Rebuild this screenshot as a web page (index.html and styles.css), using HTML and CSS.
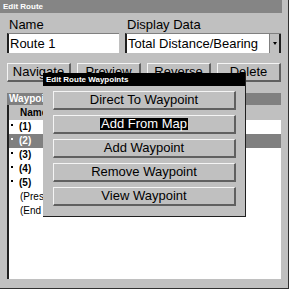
FILE: index.html
```html
<!DOCTYPE html>
<html lang="en">
<head>
    <meta charset="UTF-8">
    <title>Edit Route</title>
    <link rel="stylesheet" href="styles.css">
</head>
<body>
    <div class="window">
        <div class="titlebar">Edit Route</div>
        <div class="content">
            <div class="fields">
                <div class="field">
                    <div class="label">Name</div>
                    <div class="textbox">Route 1</div>
                </div>
                <div class="field">
                    <div class="label">Display Data</div>
                    <div class="select">
                        <div class="select-value">Total Distance/Bearing</div>
                        <div class="select-arrow"><span class="arrow"></span></div>
                    </div>
                </div>
            </div>
            <div class="actions">
                <button class="btn">Navigate</button>
                <button class="btn">Preview</button>
                <button class="btn">Reverse</button>
                <button class="btn">Delete</button>
            </div>
            <div class="waypoints">
                <div class="wp-head">Waypoints</div>
                <div class="wp-cols">Name</div>
                <div class="wp-list">
                    <div class="wp-row"><span class="dot"></span>(1)</div>
                    <div class="wp-row selected"><span class="dot"></span>(2)</div>
                    <div class="wp-row"><span class="dot"></span>(3)</div>
                    <div class="wp-row"><span class="dot"></span>(4)</div>
                    <div class="wp-row"><span class="dot"></span>(5)</div>
                    <div class="wp-row plain">(Present Position)</div>
                    <div class="wp-row plain">(End of Route)</div>
                </div>
            </div>
        </div>

        <!-- popup menu over the route form -->
        <div class="popup">
            <div class="popup-title">Edit Route Waypoints</div>
            <div class="popup-body">
                <button class="btn menu-btn">Direct To Waypoint</button>
                <button class="btn menu-btn"><span class="hilite">Add From Map</span></button>
                <button class="btn menu-btn">Add Waypoint</button>
                <button class="btn menu-btn">Remove Waypoint</button>
                <button class="btn menu-btn">View Waypoint</button>
            </div>
        </div>
    </div>
</body>
</html>
```

FILE: styles.css
```css
body {
    margin: 0;
    font-family: "Liberation Sans", Arial, sans-serif;
    background: #c0c0c0;
    color: #000;
}
.window {
    position: relative;
    width: 289px;
    height: 289px;
    box-sizing: border-box;
    border-right: 1px solid #303030;
    border-bottom: 1px solid #303030;
    background: #c0c0c0;
    display: flex;
    flex-direction: column;
}
.titlebar {
    width: 282px;
    height: 13px;
    line-height: 13px;
    background: #858585;
    color: #fff;
    font-size: 8px;
    font-weight: bold;
    padding-left: 3px;
    box-sizing: border-box;
}
.content {
    flex: 1;
    display: flex;
    flex-direction: column;
    padding: 4px 7px 0 7px;
}
.fields {
    display: grid;
    grid-template-columns: 112px 156px;
    column-gap: 6px;
}
.label {
    font-size: 13px;
    line-height: 15px;
    margin-bottom: 1px;
    padding-left: 2px;
}
.textbox, .select {
    height: 20px;
    box-sizing: border-box;
    background: #fff;
    border-left: 2px solid #202020;
    border-top: 1px solid #808080;
    font-size: 13px;
    line-height: 19px;
}
.textbox {
    padding-left: 1px;
}
.select {
    display: flex;
}
.select-value {
    flex: 1;
    padding-left: 1px;
}
.select-arrow {
    width: 9px;
    background: #c0c0c0;
    border-left: 1px solid #808080;
    border-right: 2px solid #202020;
    display: flex;
    align-items: center;
    justify-content: center;
}
.arrow {
    width: 0;
    height: 0;
    border-left: 2px solid transparent;
    border-right: 2px solid transparent;
    border-top: 3px solid #000;
}
.actions {
    display: flex;
    gap: 6px;
    margin-top: 10px;
}
.btn {
    height: 19px;
    width: 64px;
    box-sizing: border-box;
    padding: 0;
    background: #c0c0c0;
    border-top: 1px solid #f4f4f4;
    border-left: 1px solid #f4f4f4;
    border-right: 2px solid #606060;
    border-bottom: 2px solid #606060;
    font-family: "Liberation Sans", Arial, sans-serif;
    font-size: 13px;
    line-height: 16px;
    color: #000;
    text-align: center;
}
.waypoints {
    flex: 1;
    display: flex;
    flex-direction: column;
    margin-top: 11px;
    margin-bottom: 9px;
}
.wp-head {
    height: 12px;
    line-height: 12px;
    background: #808080;
    color: #fff;
    font-size: 10px;
    font-weight: bold;
    padding-left: 2px;
}
.wp-cols {
    height: 15px;
    line-height: 15px;
    font-size: 10px;
    font-weight: bold;
    padding-left: 11px;
    border-left: 2px solid #202020;
}
.wp-list {
    flex: 1;
    background: #fff;
    border-left: 2px solid #202020;
}
.wp-row {
    height: 14px;
    line-height: 14px;
    font-size: 10px;
    font-weight: bold;
    padding-left: 1px;
    display: flex;
    align-items: center;
}
.wp-row.selected {
    background: #808080;
    color: #fff;
}
.wp-row.plain {
    font-weight: normal;
    padding-left: 11px;
}
.dot {
    width: 2px;
    height: 2px;
    background: #000;
    margin: 0 6px 4px 1px;
}
.selected .dot {
    background: #fff;
}
.popup {
    position: absolute;
    left: 43px;
    top: 73px;
    width: 203px;
    height: 144px;
    box-sizing: border-box;
    border-right: 1px solid #202020;
    border-bottom: 1px solid #202020;
    background: #c0c0c0;
}
.popup-title {
    height: 13px;
    line-height: 13px;
    background: #000;
    color: #fff;
    font-size: 8px;
    font-weight: bold;
    padding-left: 3px;
}
.popup-body {
    display: flex;
    flex-direction: column;
    gap: 5px;
    padding: 5px 9px 0 10px;
}
.menu-btn {
    width: 183px;
}
.hilite {
    display: inline-block;
    background: #000;
    color: #fff;
    line-height: 12px;
    padding: 0 1px;
}
```
